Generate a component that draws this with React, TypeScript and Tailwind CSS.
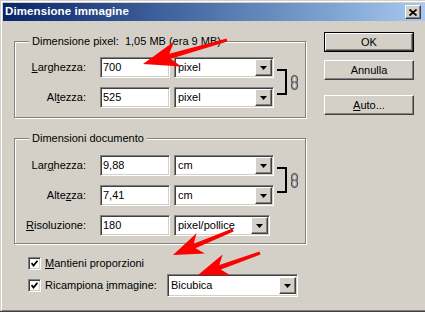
import React from 'react';

const FONT = { fontFamily: '"Liberation Sans", Arial, sans-serif' };

const sunken =
  'border border-t-[#808080] border-l-[#808080] border-b-white border-r-white shadow-[inset_1px_1px_0_#404040,inset_-1px_-1px_0_#D4D0C8]';
const raised =
  'border border-t-white border-l-white border-b-[#404040] border-r-[#404040] shadow-[inset_-1px_-1px_0_#808080]';

const DropButton: React.FC = () => (
  <div className={`w-[17px] h-[17px] bg-[#D4D0C8] flex items-center justify-center ${raised}`}>
    <svg width="7" height="4" viewBox="0 0 7 4">
      <polygon points="0,0 7,0 3.5,4" fill="#000" />
    </svg>
  </div>
);

const Select: React.FC<{ value: string; w: string; h?: string }> = ({ value, w, h = 'h-[21px]' }) => (
  <div className={`${w} ${h} bg-white flex items-center justify-between pl-[3px] pr-[1px] ${sunken}`}>
    <span>{value}</span>
    <DropButton />
  </div>
);

const Input: React.FC<{ value: string }> = ({ value }) => (
  <div className={`w-[70px] h-[21px] bg-white flex items-center pl-[2px] ${sunken}`}>{value}</div>
);

const Row: React.FC<{ label: React.ReactNode; value: string; unit: string; selW?: string }> = ({
  label,
  value,
  unit,
  selW = 'w-[100px]',
}) => (
  <div className="flex items-center h-[21px]">
    <span className="w-[71px] text-right">{label}</span>
    <div className="ml-[14px]">
      <Input value={value} />
    </div>
    <div className="ml-[4px]">
      <Select value={unit} w={selW} />
    </div>
  </div>
);

// chain link icon next to the bracket
const Chain: React.FC = () => (
  <svg width="7" height="15" viewBox="0 0 7 15">
    <rect x="0.5" y="0.5" width="6" height="8" rx="3" fill="#A0A0A0" stroke="#404040" />
    <rect x="0.5" y="6.5" width="6" height="8" rx="3" fill="#A0A0A0" stroke="#404040" />
    <rect x="2.5" y="2.5" width="2" height="4" fill="#E8E8E8" />
    <rect x="2.5" y="8.5" width="2" height="4" fill="#E8E8E8" />
  </svg>
);

const Bracket: React.FC = () => (
  <div className="ml-[3px] mt-[12px] flex items-center self-start">
    <div className="w-[10px] h-[26px] border-t-2 border-r-2 border-b-2 border-black" />
    <div className="ml-[4px]">
      <Chain />
    </div>
  </div>
);

const Group: React.FC<{ title: string; pt: string; pb: string; children: React.ReactNode }> = ({
  title,
  pt,
  pb,
  children,
}) => (
  <div
    className={`relative w-[292px] border border-[#808080] shadow-[inset_1px_1px_0_#fff,1px_1px_0_#fff] ${pt} ${pb}`}
  >
    <span className="absolute -top-[8px] left-[14px] px-[3px] bg-[#D4D0C8] leading-[14px] whitespace-pre">
      {title}
    </span>
    {children}
  </div>
);

const Checkbox: React.FC = () => (
  <div className={`w-[13px] h-[13px] bg-white flex items-center justify-center ${sunken}`}>
    <svg width="7" height="7" viewBox="0 0 7 7">
      <polyline points="0.5,3 2.5,5.5 6.5,0.8" fill="none" stroke="#000" strokeWidth="1.8" />
    </svg>
  </div>
);

const Button: React.FC<{ children: React.ReactNode; primary?: boolean }> = ({ children, primary }) =>
  primary ? (
    <div className="w-[90px] h-[20px] border border-black">
      <div className={`w-full h-full flex items-center justify-center ${raised}`}>{children}</div>
    </div>
  ) : (
    <div className={`w-[90px] h-[20px] flex items-center justify-center ${raised}`}>{children}</div>
  );

function arrowPoints(tx: number, ty: number, sx: number, sy: number, hl: number, hw: number, w1: number, w2: number) {
  const dx = sx - tx;
  const dy = sy - ty;
  const L = Math.hypot(dx, dy);
  const ux = dx / L;
  const uy = dy / L;
  const nx = -uy;
  const ny = ux;
  const bx = tx + ux * hl;
  const by = ty + uy * hl;
  const cx = tx + ux * hl * 0.78;
  const cy = ty + uy * hl * 0.78;
  const p = (x: number, y: number) => `${x.toFixed(1)},${y.toFixed(1)}`;
  return [
    p(tx, ty),
    p(bx + nx * hw, by + ny * hw),
    p(cx + nx * w1, cy + ny * w1),
    p(sx + nx * w2, sy + ny * w2),
    p(sx - nx * w2, sy - ny * w2),
    p(cx - nx * w1, cy - ny * w1),
    p(bx - nx * hw, by - ny * hw),
  ].join(' ');
}

const Arrows: React.FC = () => (
  <svg className="absolute inset-0 pointer-events-none" width="425" height="312" viewBox="0 0 425 312">
    <polygon points={arrowPoints(143, 64, 227, 40, 36, 13, 2.6, 1.6)} fill="#FF0000" />
    <polygon points={arrowPoints(173, 255, 233, 230, 30, 11, 2.4, 1.5)} fill="#FF0000" />
    <polygon points={arrowPoints(198, 275, 260, 253, 30, 11, 2.4, 1.5)} fill="#FF0000" />
  </svg>
);

const App: React.FC = () => {
  return (
    <div
      className="relative w-[425px] h-[312px] bg-[#D4D0C8] border-b border-[#404040] pt-[1px] pl-[1px] overflow-hidden text-[11px] text-black"
      style={FONT}
    >
      <div className="h-[310px] border-t border-l border-white border-b border-b-[#808080] p-[1px] pr-0 flex flex-col">
        {/* Title bar */}
        <div className="h-[18px] bg-linear-to-r from-[#0A246A] to-[#A6CAF0] flex items-center justify-between pl-[2px] pr-[4px]">
          <span className="text-white font-bold text-[11.5px] tracking-[0.1px]">Dimensione immagine</span>
          <div className={`w-[16px] h-[14px] bg-[#D4D0C8] flex items-center justify-center ${raised}`}>
            <svg width="8" height="7" viewBox="0 0 8 7">
              <path d="M0.5 0.5 L7.5 6.5 M7.5 0.5 L0.5 6.5" stroke="#000" strokeWidth="1.7" />
            </svg>
          </div>
        </div>

        {/* Body */}
        <div className="flex pl-[11px]">
          <div className="flex flex-col pt-[20px]">
            <Group title="Dimensione pixel:  1,05 MB (era 9 MB)" pt="pt-[15px]" pb="pb-[9px]">
              <div className="flex">
                <div className="flex flex-col gap-[9px]">
                  <Row label={<><span className="underline">L</span>arghezza:</>} value="700" unit="pixel" />
                  <Row label={<>Al<span className="underline">t</span>ezza:</>} value="525" unit="pixel" />
                </div>
                <Bracket />
              </div>
            </Group>

            <div className="mt-[20px]">
              <Group title="Dimensioni documento" pt="pt-[16px]" pb="pb-[7px]">
                <div className="flex">
                  <div className="flex flex-col gap-[9px]">
                    <Row label={<>Lar<span className="underline">g</span>hezza:</>} value="9,88" unit="cm" />
                    <Row label={<>Alte<span className="underline">z</span>za:</>} value="7,41" unit="cm" />
                  </div>
                  <Bracket />
                </div>
                <div className="mt-[9px]">
                  <Row
                    label={<><span className="underline">R</span>isoluzione:</>}
                    value="180"
                    unit="pixel/pollice"
                    selW="w-[96px]"
                  />
                </div>
              </Group>
            </div>

            <div className="ml-[14px] mt-[13px] flex flex-col gap-[4px]">
              <div className="flex items-center h-[13px]">
                <Checkbox />
                <span className="ml-[4px]">
                  <span className="underline">M</span>antieni proporzioni
                </span>
              </div>
              <div className="flex items-center h-[23px]">
                <Checkbox />
                <span className="ml-[4px]">
                  Ricampiona <span className="underline">i</span>mmagine:
                </span>
                <div className="ml-[10px]">
                  <Select value="Bicubica" w="w-[131px]" h="h-[23px]" />
                </div>
              </div>
            </div>
          </div>

          <div className="ml-[18px] pt-[11px] flex flex-col">
            <Button primary>OK</Button>
            <div className="mt-[8px]">
              <Button>Annulla</Button>
            </div>
            <div className="mt-[15px]">
              <Button>
                <span>
                  <span className="underline">A</span>uto...
                </span>
              </Button>
            </div>
          </div>
        </div>
      </div>
      <Arrows />
    </div>
  );
};

export default App;
